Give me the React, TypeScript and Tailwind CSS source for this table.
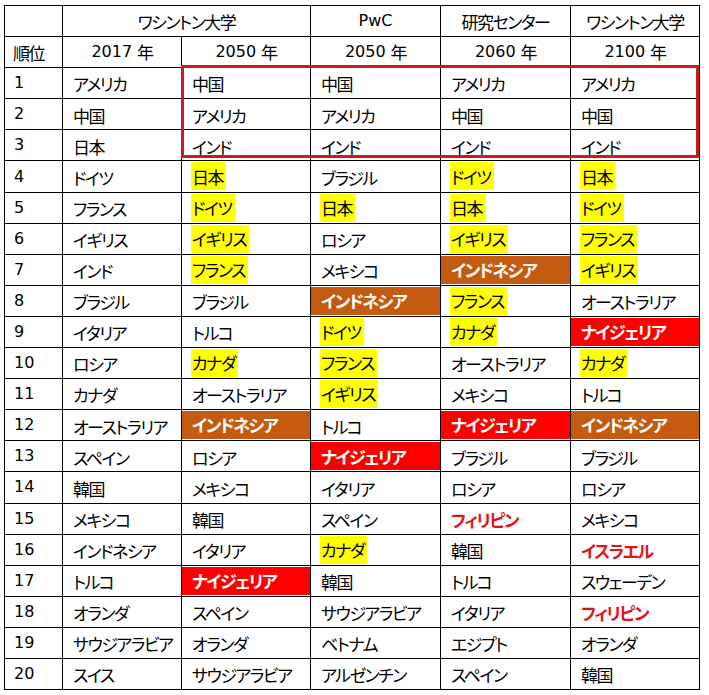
import React from "react";

// prefix: y = yellow highlight, b = brown cell, r = red cell, t = red bold text
const rows: string[][] = [
  ["アメリカ", "中国", "中国", "アメリカ", "アメリカ"],
  ["中国", "アメリカ", "アメリカ", "中国", "中国"],
  ["日本", "インド", "インド", "インド", "インド"],
  ["ドイツ", "y:日本", "ブラジル", "y:ドイツ", "y:日本"],
  ["フランス", "y:ドイツ", "y:日本", "y:日本", "y:ドイツ"],
  ["イギリス", "y:イギリス", "ロシア", "y:イギリス", "y:フランス"],
  ["インド", "y:フランス", "メキシコ", "b:インドネシア", "y:イギリス"],
  ["ブラジル", "ブラジル", "b:インドネシア", "y:フランス", "オーストラリア"],
  ["イタリア", "トルコ", "y:ドイツ", "y:カナダ", "r:ナイジェリア"],
  ["ロシア", "y:カナダ", "y:フランス", "オーストラリア", "y:カナダ"],
  ["カナダ", "オーストラリア", "y:イギリス", "メキシコ", "トルコ"],
  ["オーストラリア", "b:インドネシア", "トルコ", "r:ナイジェリア", "b:インドネシア"],
  ["スペイン", "ロシア", "r:ナイジェリア", "ブラジル", "ブラジル"],
  ["韓国", "メキシコ", "イタリア", "ロシア", "ロシア"],
  ["メキシコ", "韓国", "スペイン", "t:フィリピン", "メキシコ"],
  ["インドネシア", "イタリア", "y:カナダ", "韓国", "t:イスラエル"],
  ["トルコ", "r:ナイジェリア", "韓国", "トルコ", "スウェーデン"],
  ["オランダ", "スペイン", "サウジアラビア", "イタリア", "t:フィリピン"],
  ["サウジアラビア", "オランダ", "ベトナム", "エジプト", "オランダ"],
  ["スイス", "サウジアラビア", "アルゼンチン", "スペイン", "韓国"],
];

const jp = "font-['Noto_Sans_CJK_JP',sans-serif] text-[17px] tracking-[-1.5px] whitespace-nowrap [font-feature-settings:'palt']";
const lat = "font-['DejaVu_Sans','Noto_Sans_CJK_JP',sans-serif] text-[16px] whitespace-nowrap";
const cell = "border-r border-b border-black h-[31.1px] overflow-hidden";

function Cell({ value }: { value: string }) {
  const kind = value.includes(":") ? value.split(":")[0] : "";
  const text = value.includes(":") ? value.split(":")[1] : value;

  if (kind === "b" || kind === "r") {
    return (
      <div className={`${cell} pt-px`}>
        <div className={`${kind === "b" ? "bg-[#c55a11]" : "bg-[#ff0000]"} h-[28px] flex items-center pl-[10px] text-white font-bold ${jp}`}>
          {text}
        </div>
      </div>
    );
  }
  if (kind === "y") {
    return (
      <div className={`${cell} pt-px pl-[9px] flex items-start text-black`}>
        <span className={`bg-[#ffff00] h-[28px] flex items-center pl-px pr-[3px] ${jp}`}>{text}</span>
      </div>
    );
  }
  return (
    <div className={`${cell} pl-[10px] flex items-center pt-[2px] ${jp} ${kind === "t" ? "text-[#e0151c] font-bold" : "text-black"}`}>
      {text}
    </div>
  );
}

export default function App() {
  return (
    <div className="min-h-screen bg-white pl-[4px] pt-[5px] text-black">
      <div className="relative w-[696px] border-l border-t border-black grid grid-cols-[58px_119px_129px_130px_130px_129px]">
        <div className={cell} />
        <div className={`${cell} col-span-2 flex items-center justify-center pt-[2px] ${jp}`}>ワシントン大学</div>
        <div className={`${cell} flex items-center justify-center ${lat}`}>PwC</div>
        <div className={`${cell} flex items-center justify-center pt-[2px] ${jp}`}>研究センター</div>
        <div className={`${cell} flex items-center justify-center pt-[2px] ${jp}`}>ワシントン大学</div>

        <div className={`${cell} flex items-center pl-[8px] pt-[2px] ${jp}`}>順位</div>
        {["2017", "2050", "2050", "2060", "2100"].map((y, i) => (
          <div key={i} className={`${cell} flex items-center justify-center gap-[5px] ${lat}`}>
            <span>{y}</span>
            <span className={jp}>年</span>
          </div>
        ))}

        {rows.map((r, i) => (
          <React.Fragment key={i}>
            <div className={`${cell} flex items-center pl-[9px] ${lat}`}>{i + 1}</div>
            {r.map((v, j) => (
              <Cell key={j} value={v} />
            ))}
          </React.Fragment>
        ))}

        <div className="absolute left-[176px] top-[59px] w-[518px] h-[93px] border-[3px] border-[#d0181c] pointer-events-none" />
      </div>
    </div>
  );
}
